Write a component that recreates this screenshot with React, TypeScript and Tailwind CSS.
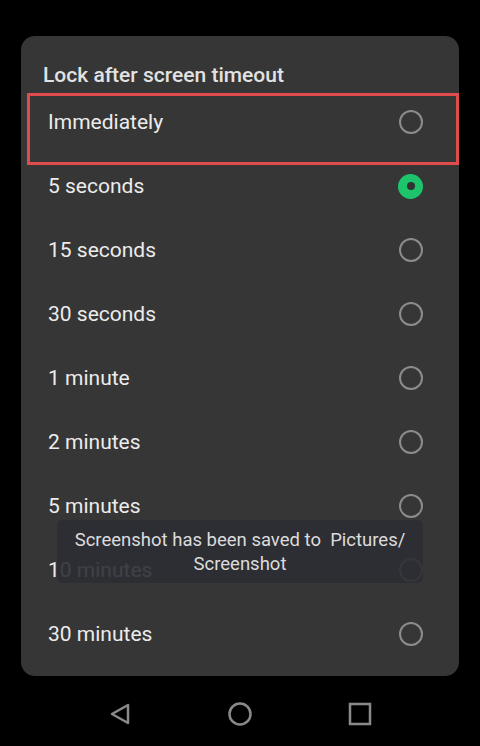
const options = [
  'Immediately',
  '5 seconds',
  '15 seconds',
  '30 seconds',
  '1 minute',
  '2 minutes',
  '5 minutes',
  '10 minutes',
  '30 minutes',
];

const Radio = ({ checked }: { checked: boolean }) =>
  checked ? (
    <span className="flex h-[25px] w-[25px] items-center justify-center rounded-full bg-[#1ec46b]">
      <span className="h-[8px] w-[8px] rounded-full bg-[#2f3331]" />
    </span>
  ) : (
    <span className="h-[24px] w-[24px] rounded-full border-2 border-[#8c8c8c]" />
  );

export default function App() {
  return (
    <div className="flex h-[746px] w-[480px] flex-col bg-black font-['Roboto',sans-serif]">
      <div className="relative mx-[21px] mt-[36px] w-[438px] rounded-[14px] bg-[#363636] pb-[10px]">
        <div className="pl-[22px] pt-[27px] pb-[3px] text-[21px] font-medium leading-[24px] text-[#e2e2e2]">
          Lock after screen timeout
        </div>
        {options.map((label, i) => (
          <div key={label} className="flex h-[64px] items-center justify-between pl-[27px] pr-[36px]">
            <span className="pt-[2px] text-[21px] text-[#ececec]">{label}</span>
            <Radio checked={i === 1} />
          </div>
        ))}

        {/* red highlight around first option */}
        <div className="absolute left-[6px] top-[57px] h-[72px] w-[432px] border-[3px] border-[#e04b4b]" />

        {/* toast */}
        <div className="absolute left-[36px] top-[484px] flex h-[63px] w-[366px] flex-col items-center justify-center rounded-[6px] bg-[#2c2e34]/90 text-[18.5px] leading-[24px] text-[#dcdcdc]">
          <span>Screenshot has been saved to&nbsp; Pictures/</span>
          <span>Screenshot</span>
        </div>
      </div>

      <div className="flex flex-1 items-center justify-center gap-[96px] pt-[6px]">
        <svg width="24" height="24" viewBox="0 0 24 24" fill="none" stroke="#8a8a8a" strokeWidth="2.5" strokeLinejoin="round">
          <path d="M20 3 L4 12 L20 21 Z" />
        </svg>
        <svg width="24" height="24" viewBox="0 0 24 24" fill="none" stroke="#8a8a8a" strokeWidth="2.5">
          <circle cx="12" cy="12" r="10.5" />
        </svg>
        <svg width="24" height="24" viewBox="0 0 24 24" fill="none" stroke="#8a8a8a" strokeWidth="2.5">
          <rect x="2" y="2" width="20" height="20" />
        </svg>
      </div>
    </div>
  );
}
